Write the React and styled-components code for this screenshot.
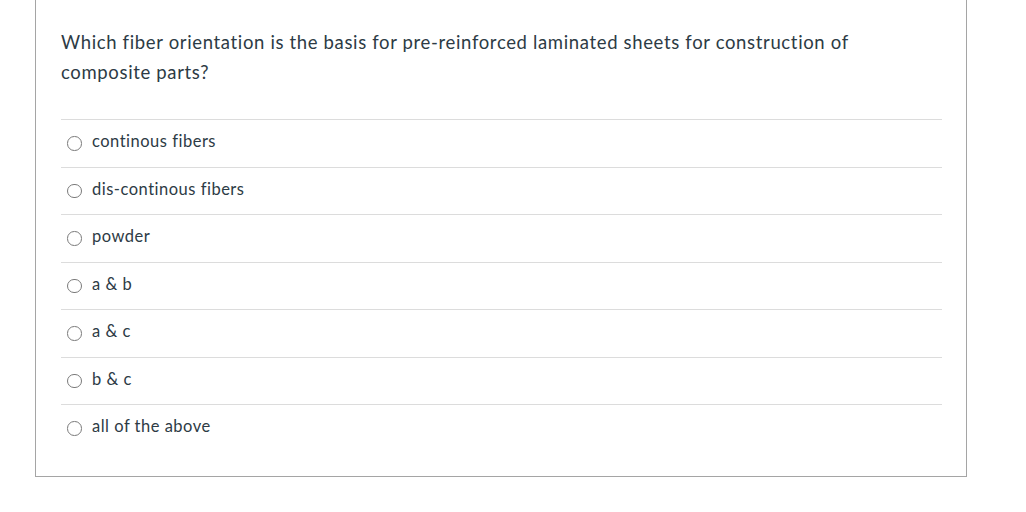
import React from 'react'
import styled, { createGlobalStyle } from 'styled-components'

const GlobalStyle = createGlobalStyle`
    html, body {
        margin: 0;
        padding: 0;
        background: #fff;
    }

    body {
        font-family: Lato, "Open Sans", sans-serif;
        color: #2d3b45;
    }
`;

const Page = styled.div`
    padding-left: 35px;
    width: 932px;
`;

const QuestionCard = styled.div`
    border: 1px solid #a5a5a5;
    border-top: none;
    padding: 26.5px 24px 24.5px 25px;
`;

const QuestionText = styled.p`
    margin: 0;
    max-width: 860px;
    font-size: 18.5px;
    letter-spacing: 0.65px;
    line-height: 30px;
`;

const AnswerList = styled.ul`
    list-style: none;
    margin: 32.5px 0 0 0;
    padding: 0;
`;

const AnswerRow = styled.li`
    box-sizing: border-box;
    height: 47.5px;
    border-top: 1px solid #dcdcdc;
    display: flex;
    align-items: center;
    padding-left: 6px;
    font-size: 16.5px;
    letter-spacing: 0.5px;
`;

const Radio = styled.span`
    box-sizing: border-box;
    width: 14.5px;
    height: 14.5px;
    border-radius: 50%;
    border: 1px solid #7a7a7a;
    margin-right: 10.5px;
    flex-shrink: 0;
`;

const Label = styled.span`
    padding-bottom: 4px;
`;

const answers = [
    'continous fibers',
    'dis-continous fibers',
    'powder',
    'a & b',
    'a & c',
    'b & c',
    'all of the above',
]

const App = () => {
    return (
        <Page>
            <GlobalStyle />
            <QuestionCard>
                <QuestionText>
                    Which fiber orientation is the basis for pre-reinforced laminated sheets for construction of composite parts?
                </QuestionText>
                <AnswerList>
                    {answers.map(a => (
                        <AnswerRow key={a}>
                            <Radio />
                            <Label>{a}</Label>
                        </AnswerRow>
                    ))}
                </AnswerList>
            </QuestionCard>
        </Page>
    )
}

export default App
